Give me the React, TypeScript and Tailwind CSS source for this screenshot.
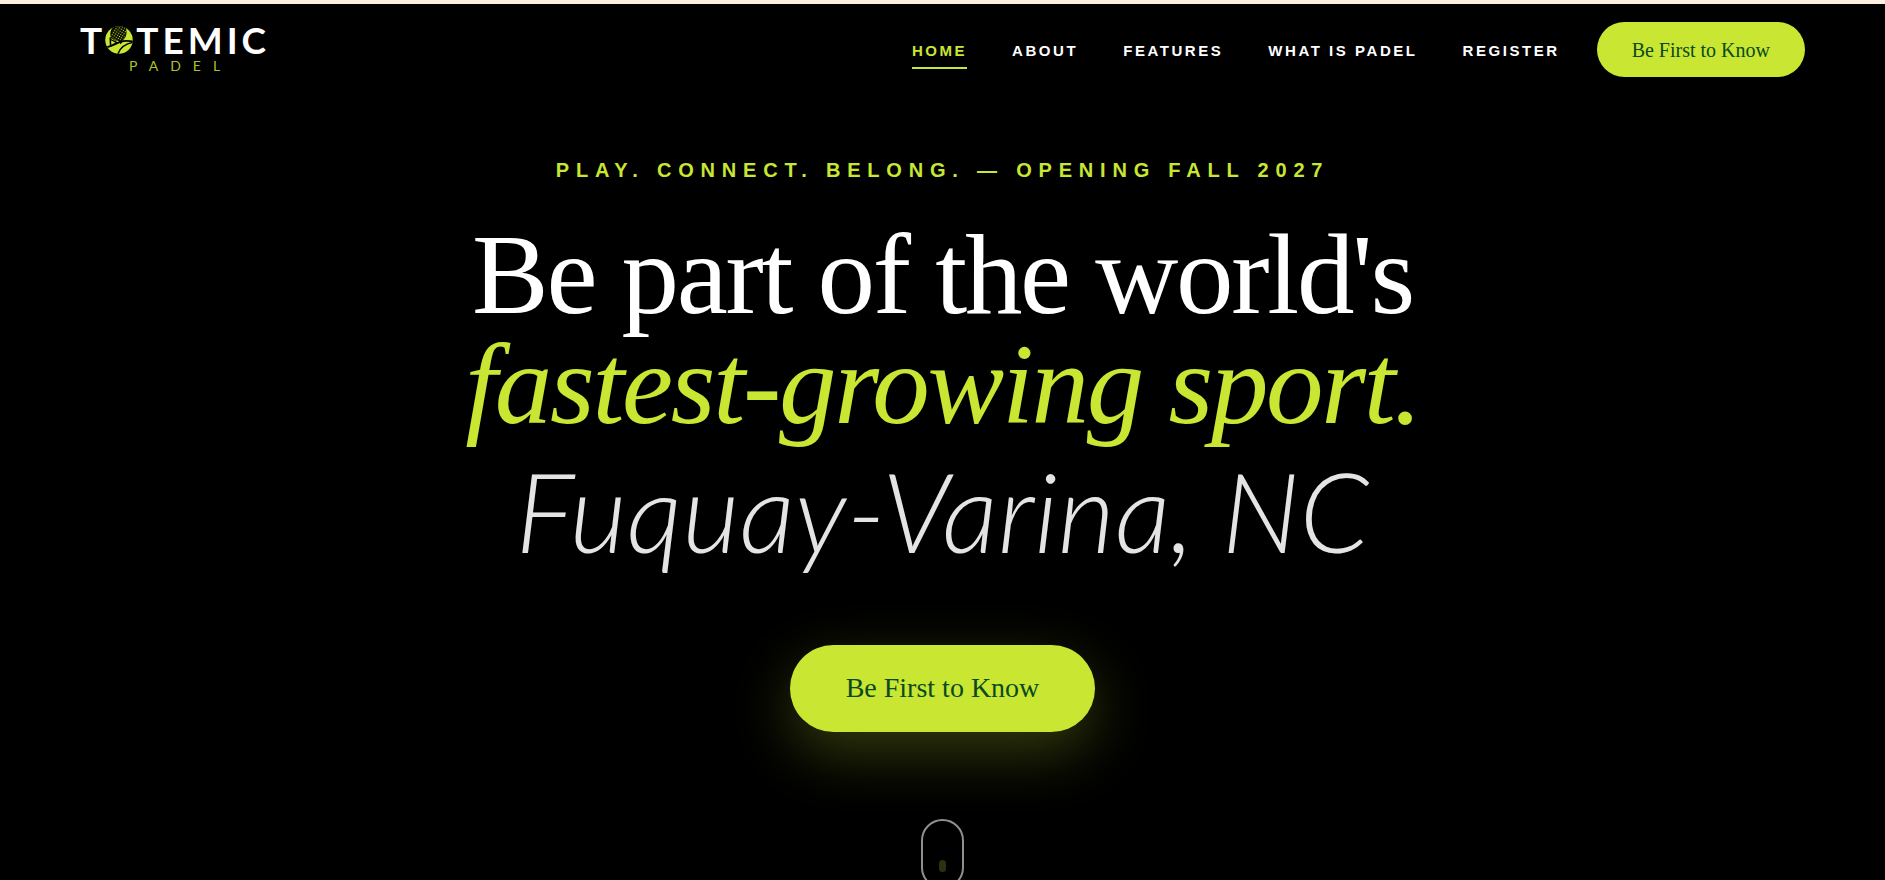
const links = ["Home", "About", "Features", "What is Padel", "Register"];

function BallMark() {
  return (
    <svg viewBox="0 0 54 54" className="h-7 w-7 shrink-0" aria-hidden="true">
      <defs>
        <clipPath id="ball">
          <circle cx="27" cy="27" r="26.5" />
        </clipPath>
        <pattern id="holes" width="4.6" height="4.6" patternUnits="userSpaceOnUse" patternTransform="rotate(32)">
          <rect width="4.6" height="4.6" fill="#0b0f00" />
          <circle cx="2.3" cy="2.3" r="1.2" fill="#c8e632" />
        </pattern>
      </defs>
      <g clipPath="url(#ball)">
        <rect width="54" height="54" fill="#c8e632" />
        <path d="M14 0 H41 L41 8 C43 18 38 27 29 30 L12 24 C9 16 10 8 16 2 Z" fill="#000" />
        <path d="M17 6 C24 -1 38 1 40 8 C42 17 38 27 28 29 C20 30 12 26 12 19 C12 14 13 10 17 6 Z" fill="url(#holes)" />
        <path d="M10 22 L11 40" stroke="#000" strokeWidth="3" />
        <path d="M11 26 L23 32 L12 38" fill="none" stroke="#000" strokeWidth="2.5" />
        <path d="M26 28 L35 29 L30 35 Z" fill="#000" />
        <path d="M-2 43 C12 39 20 35 28 31 C38 27 46 28 56 30" fill="none" stroke="#000" strokeWidth="3.5" />
        <path d="M24 56 C28 43 38 34 56 31" fill="none" stroke="#000" strokeWidth="3" />
      </g>
    </svg>
  );
}

function Logo() {
  return (
    <a href="#home" aria-label="Totemic Padel" className="flex flex-col font-['Lato',sans-serif]">
      <span className="flex items-center gap-[3px] text-[37px] leading-7 font-bold text-white">
        <span>T</span>
        <BallMark />
        <span className="tracking-[4px]">TEMIC</span>
      </span>
      <span className="mt-1 pl-[49px] text-sm leading-4 tracking-[12px] text-[#a9c42a]">PADEL</span>
    </a>
  );
}

export default function App() {
  return (
    <div className="flex h-screen flex-col overflow-hidden border-t-4 border-[#fdf0e0] bg-black">
      <header className="flex h-[91px] shrink-0 items-center justify-between px-20">
        <Logo />
        <div className="flex items-center gap-[37px]">
          <nav className="flex gap-[45px] font-['Liberation_Sans',sans-serif] text-[15px] leading-5 font-bold tracking-[0.17em] uppercase">
            {links.map((label, i) => (
              <a
                key={label}
                href={"#" + label.toLowerCase().replace(/ /g, "-")}
                className={
                  i === 0
                    ? "border-b-2 border-[#c8e632] pt-2.5 pb-1.5 text-[#c8e632]"
                    : "border-b-2 border-transparent pt-2.5 pb-1.5 text-white"
                }
              >
                {label}
              </a>
            ))}
          </nav>
          <button
            type="button"
            className="h-[55px] rounded-full bg-[#c8e632] px-[35px] font-['Liberation_Serif',serif] text-xl text-[#0a4a1e]"
          >
            Be First to Know
          </button>
        </div>
      </header>

      <main className="flex flex-col items-center text-center">
        <p className="mt-[63px] font-['Liberation_Sans',sans-serif] text-xl leading-6 font-bold tracking-[0.34em] text-[#c8e632] uppercase">
          Play. Connect. Belong. — Opening Fall 2027
        </p>
        <h1 className="mt-[38px] font-['Liberation_Serif',serif] text-[115px] leading-[110px] tracking-[-0.02em] text-white">
          <span className="block">Be part of the world's</span>
          <em className="block text-[#c8e632]">fastest-growing sport.</em>
        </h1>
        <p className="font-['Lato',sans-serif] text-[111px] leading-[140px] font-light text-[#e4e4e4] italic">
          Fuquay-Varina, NC
        </p>
        <button
          type="button"
          className="mt-[65px] h-[87px] rounded-full bg-[#c8e632] px-14 pb-0.5 font-['Liberation_Serif',serif] text-[28px] text-[#0a4a1e] shadow-[0_20px_60px_rgba(200,230,50,0.26)]"
        >
          Be First to Know
        </button>
        <a
          href="#about"
          aria-label="Scroll down"
          className="mt-[87px] flex h-[70px] w-[43px] shrink-0 justify-center rounded-full border-2 border-[#8f8f8f] pt-[39px]"
        >
          <span className="h-3 w-[7px] rounded-full bg-[#2c320d]" />
        </a>
      </main>
    </div>
  );
}
